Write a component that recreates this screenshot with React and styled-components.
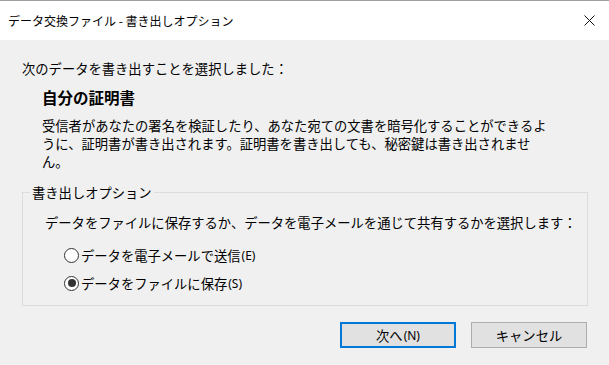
import React from 'react'
import styled, { createGlobalStyle } from 'styled-components'

const GlobalStyle = createGlobalStyle`
    html, body {
        margin: 0;
        padding: 0;
        background: #f0f0f0;
    }
    body {
        font-family: "Noto Sans CJK JP", "Noto Sans", sans-serif;
        color: #000;
    }
`

const Window = styled.div`
    width: 609px;
    height: 365px;
    background: #f0f0f0;
    display: flex;
    flex-direction: column;
    overflow: hidden;
`

const TitleBar = styled.div`
    height: 39px;
    background: #fff;
    border-top: 1px solid #a0a0a0;
    display: flex;
    align-items: center;
    justify-content: space-between;
    padding: 0 12px 0 8px;
    font-size: 12px;
`

const Close = styled.button`
    width: 16px;
    height: 16px;
    border: none;
    background: none;
    padding: 0;
    display: flex;
    align-items: center;
    justify-content: center;
`

const Body = styled.div`
    flex: 1;
    padding: 20px 21px 0 22px;
    font-size: 13.3px;
    line-height: 17px;
`

const Intro = styled.div``

const Heading = styled.div`
    margin: 11px 0 0 20px;
    font-size: 15.5px;
    font-weight: bold;
    line-height: 18px;
`

const Description = styled.p`
    margin: 11px 0 0 20px;
    line-height: 18px;
`

const Group = styled.fieldset`
    margin: 13px 0 0 0;
    padding: 13px 0 8px 0;
    border: 1px solid #dcdcdc;
    min-width: 0;
`

const Legend = styled.legend`
    margin-left: 7px;
    padding: 0 2px;
`

const Prompt = styled.div`
    margin: 0 0 10px 22px;
`

const Option = styled.label`
    display: flex;
    align-items: center;
    height: 28px;
    margin-left: 41px;
`

const Radio = styled.span`
    width: 13px;
    height: 13px;
    border: 1px solid #333;
    border-radius: 50%;
    background: #fff;
    margin-right: 2px;
    display: flex;
    align-items: center;
    justify-content: center;
    &::after {
        content: '';
        display: ${(p) => (p.checked ? 'block' : 'none')};
        width: 8px;
        height: 8px;
        border-radius: 50%;
        background: #333;
    }
`

const Key = styled.span`
    font-family: "Noto Sans", sans-serif;
    font-size: 12px;
    margin-left: 1px;
`

const Buttons = styled.div`
    display: flex;
    justify-content: flex-end;
    gap: 15px;
    margin-top: 16px;
    padding-right: 1px;
`

const Button = styled.button`
    width: 116px;
    height: 26px;
    box-sizing: border-box;
    background: #e1e1e1;
    border: ${(p) => (p.primary ? '2px solid #0078d7' : '1px solid #adadad')};
    font-family: inherit;
    font-size: 13.3px;
    color: #000;
    padding: 0;
    display: flex;
    align-items: center;
    justify-content: center;
`

const App = () => {
    return (
        <Window>
            <GlobalStyle />
            <TitleBar>
                <span>データ交換ファイル - 書き出しオプション</span>
                <Close aria-label="閉じる">
                    <svg width="11" height="11" viewBox="0 0 11 11">
                        <path d="M0.5 0.5 L10.5 10.5 M10.5 0.5 L0.5 10.5" stroke="#111" strokeWidth="1" fill="none" />
                    </svg>
                </Close>
            </TitleBar>
            <Body>
                <Intro>次のデータを書き出すことを選択しました：</Intro>
                <Heading>自分の証明書</Heading>
                <Description>
                    受信者があなたの署名を検証したり、あなた宛ての文書を暗号化することができるよ<br />
                    うに、証明書が書き出されます。証明書を書き出しても、秘密鍵は書き出されませ<br />
                    ん。
                </Description>
                <Group>
                    <Legend>書き出しオプション</Legend>
                    <Prompt>データをファイルに保存するか、データを電子メールを通じて共有するかを選択します：</Prompt>
                    <Option>
                        <Radio />
                        データを電子メールで送信<Key>(E)</Key>
                    </Option>
                    <Option>
                        <Radio checked />
                        データをファイルに保存<Key>(S)</Key>
                    </Option>
                </Group>
                <Buttons>
                    <Button primary>次へ<Key>(N)</Key></Button>
                    <Button>キャンセル</Button>
                </Buttons>
            </Body>
        </Window>
    )
}

export default App
